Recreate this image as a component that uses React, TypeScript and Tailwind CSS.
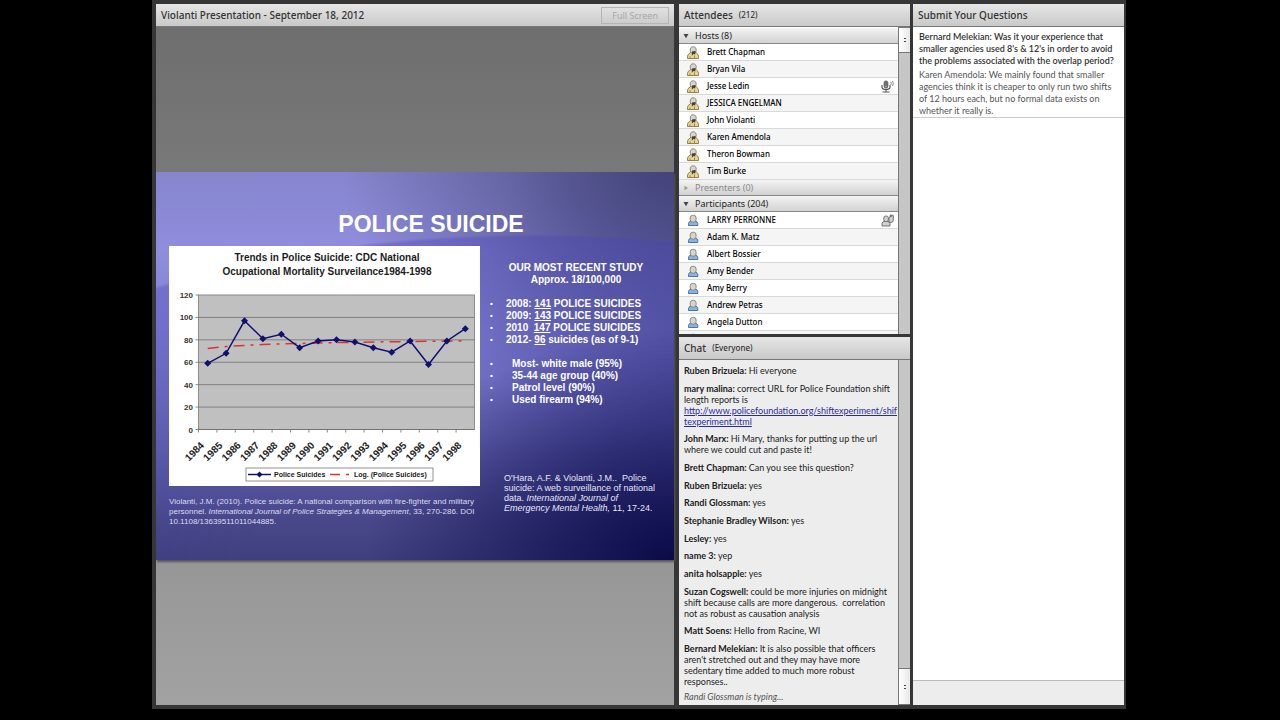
import type { ReactNode } from "react";

const hosts = [
  "Brett Chapman",
  "Bryan Vila",
  "Jesse Ledin",
  "JESSICA ENGELMAN",
  "John Violanti",
  "Karen Amendola",
  "Theron Bowman",
  "Tim Burke",
];

const participants = [
  "LARRY PERRONNE",
  "Adam K. Matz",
  "Albert Bossier",
  "Amy Bender",
  "Amy Berry",
  "Andrew Petras",
  "Angela Dutton",
  "",
];

type Message = { from: string; lines: string[]; link?: string[] };

const messages: Message[] = [
  { from: "Ruben Brizuela", lines: ["Hi everyone"] },
  {
    from: "mary malina",
    lines: ["correct URL for Police Foundation shift", "length reports is"],
    link: [
      "http://www.policefoundation.org/shiftexperiment/shif",
      "texperiment.html",
    ],
  },
  {
    from: "John Marx",
    lines: [
      "Hi Mary, thanks for putting up the url",
      "where we could cut and paste it!",
    ],
  },
  { from: "Brett Chapman", lines: ["Can you see this question?"] },
  { from: "Ruben Brizuela", lines: ["yes"] },
  { from: "Randi Glossman", lines: ["yes"] },
  { from: "Stephanie Bradley Wilson", lines: ["yes"] },
  { from: "Lesley", lines: ["yes"] },
  { from: "name 3", lines: ["yep"] },
  { from: "anita holsapple", lines: ["yes"] },
  {
    from: "Suzan Cogswell",
    lines: [
      "could be more injuries on midnight",
      "shift because calls are more dangerous.  correlation",
      "not as robust as causation analysis",
    ],
  },
  { from: "Matt Soens", lines: ["Hello from Racine, WI"] },
  {
    from: "Bernard Melekian",
    lines: [
      "It is also possible that officers",
      "aren't stretched out and they may have more",
      "sedentary time added to much more robust",
      "responses..",
    ],
  },
];

const suicides = [59, 68, 97, 81, 85, 73, 79, 80, 78, 73, 69, 79, 58, 79, 90];

const PLOT = { left: 29.5, right: 305.5, top: 49, bottom: 183.5 };
const STEP = (PLOT.right - PLOT.left) / suicides.length;
const xAt = (i: number) => PLOT.left + STEP * (i + 0.5);
const yAt = (v: number) =>
  PLOT.bottom - (v / 120) * (PLOT.bottom - PLOT.top);

const linePoints = suicides.map((v, i) => `${xAt(i)},${yAt(v)}`).join(" ");
const trendPoints = suicides
  .map((_, i) => `${xAt(i)},${yAt(72.3 + 2.5 * Math.log(i + 1))}`)
  .join(" ");

const SuicideChart = () => (
  <svg
    viewBox="0 0 311 240"
    className="block w-full bg-white font-['Liberation_Sans',sans-serif] font-bold"
    role="img"
    aria-label="Trends in Police Suicide"
  >
    <g fontSize="10" textAnchor="middle" fill="#1c1c1c">
      <text x="158" y="15">
        Trends in Police Suicide: CDC National
      </text>
      <text x="158" y="29">
        Ocupational Mortality Surveilance1984-1998
      </text>
    </g>
    <rect
      x={PLOT.left}
      y={PLOT.top}
      width={PLOT.right - PLOT.left}
      height={PLOT.bottom - PLOT.top}
      fill="#c0c0c0"
      stroke="#8c8c8c"
    />
    {[0, 20, 40, 60, 80, 100, 120].map((v) => (
      <g key={v}>
        <line
          x1={PLOT.left - 3}
          x2={v === 120 ? PLOT.left : PLOT.right}
          y1={yAt(v)}
          y2={yAt(v)}
          stroke="#6e6e6e"
          strokeWidth="0.8"
        />
        <text x="24" y={yAt(v) + 3} fontSize="8" textAnchor="end" fill="#333">
          {v}
        </text>
      </g>
    ))}
    {suicides.map((_, i) => (
      <g key={i}>
        <line
          x1={PLOT.left + STEP * i}
          x2={PLOT.left + STEP * i}
          y1={PLOT.bottom}
          y2={PLOT.bottom + 3}
          stroke="#6e6e6e"
          strokeWidth="0.8"
        />
        <text
          transform={`translate(${xAt(i) - 3} 200) rotate(-45)`}
          fontSize="10"
          textAnchor="end"
          fill="#222"
        >
          {1984 + i}
        </text>
      </g>
    ))}
    <polyline
      points={trendPoints}
      fill="none"
      stroke="#e03030"
      strokeWidth="1.5"
      strokeDasharray="11 6 3 6"
    />
    <polyline
      points={linePoints}
      fill="none"
      stroke="#101070"
      strokeWidth="1.5"
    />
    {suicides.map((v, i) => (
      <path
        key={i}
        transform={`translate(${xAt(i)} ${yAt(v)})`}
        d="M0-3.5 3.5 0 0 3.5-3.5 0Z"
        fill="#101070"
      />
    ))}
    <rect
      x="77"
      y="222"
      width="187"
      height="13"
      fill="#fff"
      stroke="#777"
      strokeWidth="0.8"
    />
    <path d="M79 228.500H102" stroke="#101070" strokeWidth="1.5" />
    <path
      d="M90.500 225.500 93.500 228.500 90.500 231.500 87.500 228.500Z"
      fill="#101070"
    />
    <path
      d="M161 228.500H181"
      stroke="#e03030"
      strokeWidth="1.5"
      strokeDasharray="10 6 3 6"
    />
    <g fontSize="7" fill="#222">
      <text x="105" y="231">
        Police Suicides
      </text>
      <text x="185" y="231">
        Log. (Police Suicides)
      </text>
    </g>
  </svg>
);

const Slide = () => (
  <section className="aspect-4/3 w-full overflow-hidden bg-[radial-gradient(ellipse_at_100%_100%,#0b0b48_0%,#0b0b4800_42%),radial-gradient(135%_84%_at_73%_100%,#4442b800_40%,#4442b855_99%,#4442b800_100%),radial-gradient(ellipse_at_100%_0%,#44447a_0%,#44447a00_45%),linear-gradient(100deg,#8080d800_60%,#34349180_100%),linear-gradient(180deg,#8685cd_0%,#8f8ddd_20%,#8180d4_40%,#6362b0_68%,#484789_90%,#403f7e_100%)] font-['Liberation_Sans',sans-serif] text-white shadow-[1px_2px_2px_#555]">
    <h1 className="pt-10 pl-8 text-center text-[23px] leading-6 font-bold">
      POLICE SUICIDE
    </h1>
    <div className="mt-2.5 grid grid-cols-[311fr_180fr] gap-2.5 pr-1 pl-[13px]">
      <div>
        <SuicideChart />
        <p className="mt-[11px] text-[8px] leading-[10px] whitespace-nowrap text-[#dcdcf2]">
          Violanti, J.M. (2010). Police suicide: A national comparison with
          fire-fighter and military
          <br />
          personnel.{" "}
          <i>International Journal of Police Strategies &amp; Management</i>,
          33, 270-286. DOI
          <br />
          10.1108/13639511011044885.
        </p>
      </div>
      <div className="pt-4 text-[10px] leading-3 font-bold whitespace-nowrap">
        <p className="pr-2 text-center">
          OUR MOST RECENT STUDY
          <br />
          Approx. 18/100,000
        </p>
        <ul className="mt-3">
          <Bullet>
            2008: <u>141</u> POLICE SUICIDES
          </Bullet>
          <Bullet>
            2009: <u>143</u> POLICE SUICIDES
          </Bullet>
          <Bullet>
            2010&nbsp; <u>147</u> POLICE SUICIDES
          </Bullet>
          <Bullet>
            2012- <u>96</u> suicides (as of 9-1)
          </Bullet>
        </ul>
        <ul className="mt-3">
          <Bullet indent>Most- white male (95%)</Bullet>
          <Bullet indent>35-44 age group (40%)</Bullet>
          <Bullet indent>Patrol level (90%)</Bullet>
          <Bullet indent>Used firearm (94%)</Bullet>
        </ul>
        <p className="mt-[67px] pl-3.5 text-[9px] leading-[10px] font-normal text-[#e6e6f6]">
          O'Hara, A.F. &amp; Violanti, J.M..&nbsp; Police
          <br />
          suicide: A web surveillance of national
          <br />
          data. <i>International Journal of</i>
          <br />
          <i>Emergency Mental Health,</i> 11, 17-24.
        </p>
      </div>
    </div>
  </section>
);

const Bullet = ({
  indent,
  children,
}: {
  indent?: boolean;
  children: ReactNode;
}) => (
  <li className="flex">
    <span className={`text-[8px] ${indent ? "w-[22px]" : "w-4"}`}>•</span>
    <span>{children}</span>
  </li>
);

const PodHeader = ({
  title,
  note,
  children,
}: {
  title: string;
  note?: string;
  children?: ReactNode;
}) => (
  <header className="flex h-[23px] shrink-0 items-center border-b border-[#777] bg-linear-to-b from-[#e6e6e6] to-[#c9c9c9] px-[5px] text-[#333]">
    <h2 className="text-[10px] font-medium">{title}</h2>
    {note && <span className="ml-1.5 text-[8px] font-medium">{note}</span>}
    {children}
  </header>
);

const Scrollbar = ({ atEnd }: { atEnd?: boolean }) => (
  <div
    className={`flex w-3 shrink-0 flex-col border-l border-[#777] bg-[#c6c6c6] ${atEnd ? "justify-end" : ""}`}
  >
    <div
      className={`flex items-center justify-center border-y border-[#777] bg-linear-to-r from-white to-[#e8e8e8] ${atEnd ? "h-[37px]" : "h-[26px]"}`}
    >
      <span className="h-1 w-0.5 border-y border-[#444]" />
    </div>
  </div>
);

const HostIcon = () => (
  <svg viewBox="0 0 12 13" className="h-[13px] w-3">
    <path
      d="M.5 12.500V10.200Q.8 8.200 3 7.200L4 6H8.500L9.500 7.200Q11.300 8.200 11.500 10.200V12.500Z"
      fill="#ead493"
      stroke="#8a7440"
      strokeWidth=".9"
    />
    <path
      d="M6.200.8C8.300.8 9.200 2.200 9.200 4S8.300 7.400 6.200 7.400 3.200 5.800 3.200 4 4 .8 6.200.8Z"
      fill="#d8d6cc"
      stroke="#77756c"
      strokeWidth=".8"
    />
    <path d="M5 5.600 8.600 5 8.200 8.600 6.500 8 4.800 9.800Z" fill="#4a4330" />
    <path d="M3 12V10.300M7.500 9.500V12" stroke="#8a7440" strokeWidth=".8" />
  </svg>
);

const ParticipantIcon = () => (
  <svg viewBox="0 0 12 13" className="h-[13px] w-3">
    <path
      d="M1.500 11.500V9.500Q1.800 7.400 4 7H8.300Q10.500 7.400 10.800 9.500V11.500Z"
      fill="#86b4e6"
      stroke="#43699c"
      strokeWidth=".9"
    />
    <rect
      x="3.200"
      y="1.300"
      width="5.900"
      height="6.900"
      rx="2.600"
      fill="#d9d4ca"
      stroke="#77746e"
      strokeWidth=".8"
    />
  </svg>
);

const MicIcon = () => (
  <svg
    viewBox="0 0 13 13"
    className="h-[13px] w-[13px]"
    fill="none"
    stroke="#555"
    role="img"
    aria-label="Microphone on"
  >
    <rect x="3.200" y="1" width="3.600" height="7" rx="1.800" fill="#999" />
    <path
      d="M1 5V7.500Q1.500 9.500 5 9.500T9 7.500V5M5 9.500V12M1.500 12H8.500M3.500 3H6.500M3.500 5H6.500"
      strokeWidth="1.100"
    />
    <path
      d="M9.800 2Q10.800 3.500 9.800 5M11.500 1Q13 3.500 11.500 6"
      strokeWidth=".7"
    />
  </svg>
);

const RaisedHandIcon = () => (
  <svg
    viewBox="0 0 13 13"
    className="h-[13px] w-[13px]"
    fill="#d0d0d0"
    stroke="#666"
    strokeWidth=".9"
    role="img"
    aria-label="Hand raised"
  >
    <path d="M1 12V9.500Q1.300 7.500 3.500 7.300H6.500Q8.700 7.500 9 9.500V12Z" />
    <rect x="2.800" y="2" width="4.600" height="5.600" rx="2" />
    <path d="M8 8.500V4.500L9 3V1.500L10 .8V3L10.800 1 12.300 1.500V6.500Q12 8.500 10 8.500Z" />
  </svg>
);

const GroupHeader = ({
  label,
  collapsed,
}: {
  label: string;
  collapsed?: boolean;
}) => (
  <button
    type="button"
    aria-expanded={!collapsed}
    className={`flex h-4 w-full shrink-0 items-center border-b border-[#888] bg-linear-to-b from-[#f4f4f4] to-[#d2d2d2] text-[9px] ${collapsed ? "text-[#888]" : "text-[#222]"}`}
  >
    <svg viewBox="0 0 6 6" className="mr-1.5 ml-1 size-1.5">
      <path
        d={collapsed ? "M1.500 .8 5 3 1.500 5.200Z" : "M.5 1H5.500L3 5.200Z"}
        fill={collapsed ? "#999" : "#444"}
      />
    </svg>
    {label}
  </button>
);

const PersonRow = ({
  name,
  host,
  status,
}: {
  name: string;
  host?: boolean;
  status?: ReactNode;
}) => (
  <li className="flex h-[17px] shrink-0 items-center border-b border-[#d9d9d9] pr-1 pl-2 text-[8px] font-medium text-black odd:bg-white even:bg-[#f5f5f5]">
    {host ? <HostIcon /> : <ParticipantIcon />}
    <span className="ml-2 flex-1">{name}</span>
    {status}
  </li>
);

const ChatMessage = ({ from, lines, link }: Message) => (
  <li className="whitespace-pre">
    {lines.map((line, i) => (
      <p key={line}>
        {i === 0 && <b>{from}: </b>}
        {line}
      </p>
    ))}
    {link && (
      <a
        href="http://www.policefoundation.org/shiftexperiment/shiftexperiment.html"
        className="block text-[#2a2aa8] underline"
      >
        {link.map((part) => (
          <span key={part} className="block">
            {part}
          </span>
        ))}
      </a>
    )}
  </li>
);

const App = () => {
  return (
    <div className="h-screen bg-black pr-[154px] pb-[11px] pl-38 font-['Noto_Sans',sans-serif]">
      <main className="grid h-full grid-cols-[520fr_231fr_211fr] gap-[3px] bg-[#363636] pt-1 pr-0.5 pb-1 pl-1">
        <div className="flex min-h-0 min-w-0 flex-col pr-0.5">
          <PodHeader title="Violanti Presentation - September 18, 2012">
            <button
              type="button"
              disabled
              className="ml-auto border border-[#b5b5b5] px-2.5 text-[9px] leading-[15px] text-[#a8a8a8]"
            >
              Full Screen
            </button>
          </PodHeader>
          <div className="flex min-h-0 flex-1 items-center bg-linear-to-b from-[#6e6e6e] to-[#a2a2a2]">
            <Slide />
          </div>
        </div>

        <div className="grid min-h-0 min-w-0 grid-rows-[330fr_368fr] gap-[3px]">
          <section className="flex min-h-0 flex-col">
            <PodHeader title="Attendees" note="(212)" />
            <div className="flex min-h-0 flex-1 bg-white">
              <div className="min-w-0 flex-1 overflow-hidden pt-px">
                <GroupHeader label="Hosts (8)" />
                <ul>
                  {hosts.map((name) => (
                    <PersonRow
                      key={name}
                      name={name}
                      host
                      status={name === "Jesse Ledin" && <MicIcon />}
                    />
                  ))}
                </ul>
                <GroupHeader label="Presenters (0)" collapsed />
                <GroupHeader label="Participants (204)" />
                <ul>
                  {participants.map((name) => (
                    <PersonRow
                      key={name}
                      name={name}
                      status={name === "LARRY PERRONNE" && <RaisedHandIcon />}
                    />
                  ))}
                </ul>
              </div>
              <Scrollbar />
            </div>
          </section>

          <section className="flex min-h-0 flex-col">
            <PodHeader title="Chat" note="(Everyone)" />
            <div className="flex min-h-0 flex-1 bg-[#ededed] font-['Lato',sans-serif] text-[9px] leading-[11px] text-[#222]">
              <div className="flex min-w-0 flex-1 flex-col overflow-hidden pt-[5px] pb-[3px] pl-[5px]">
                <ul className="flex min-h-0 flex-1 flex-col justify-between">
                  {messages.map((message, i) => (
                    <ChatMessage key={i} {...message} />
                  ))}
                </ul>
                <p className="mt-1 text-[#555] italic">
                  Randi Glossman is typing...
                </p>
              </div>
              <Scrollbar atEnd />
            </div>
          </section>
        </div>

        <section className="flex min-h-0 min-w-0 flex-col bg-[#ededed]">
          <PodHeader title="Submit Your Questions" />
          <div className="flex-1 bg-white font-['Lato',sans-serif] text-[9px] leading-3 whitespace-pre text-[#333]">
            <div className="border-b border-[#ccc] px-1.5 pt-1">
              <p className="font-semibold">
                {
                  "Bernard Melekian: Was it your experience that\nsmaller agencies used 8's & 12's in order to avoid\nthe problems associated with the overlap period?"
                }
              </p>
              <p className="mt-0.5 text-[#555]">
                {
                  "Karen Amendola: We mainly found that smaller\nagencies think it is cheaper to only run two shifts\nof 12 hours each, but no formal data exists on\nwhether it really is."
                }
              </p>
            </div>
          </div>
          <footer className="h-[25px] border-t border-[#bbb]" />
        </section>
      </main>
    </div>
  );
};

export default App;
